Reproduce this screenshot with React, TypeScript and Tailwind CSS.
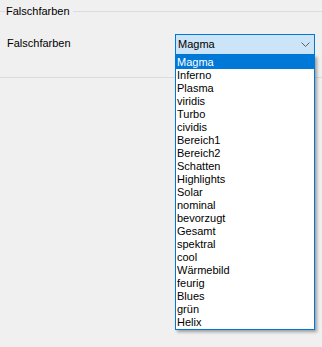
import React from "react";

const items = [
  "Magma",
  "Inferno",
  "Plasma",
  "viridis",
  "Turbo",
  "cividis",
  "Bereich1",
  "Bereich2",
  "Schatten",
  "Highlights",
  "Solar",
  "nominal",
  "bevorzugt",
  "Gesamt",
  "spektral",
  "cool",
  "Wärmebild",
  "feurig",
  "Blues",
  "grün",
  "Helix",
];

export default function App() {
  return (
    <div
      className="relative w-[322px] h-[347px] bg-[#f0f0f0] text-[11px] text-black overflow-hidden"
      style={{ fontFamily: '"Liberation Sans", Arial, sans-serif' }}
    >
      {/* group box header */}
      <div className="flex items-center h-[13px] mt-[5px]">
        <div className="w-[5px] h-px bg-[#dcdcdc]" />
        <span className="px-[1px] leading-[13px]">Falschfarben</span>
        <div className="flex-1 h-px bg-[#dcdcdc] ml-[2px]" />
      </div>

      {/* row */}
      <div className="flex items-center mt-[16px] h-[21px]">
        <span className="ml-[7px] leading-[13px] -mt-[3px]">Falschfarben</span>
        <div className="ml-auto mr-[7px] w-[140px] h-[21px] border border-[#0078d7] bg-[#cce4f7] flex items-center pl-[2px] pr-[4px]">
          <span className="leading-[13px]">Magma</span>
          <svg className="ml-auto" width="9" height="5" viewBox="0 0 9 5">
            <path d="M0.5 0.5 L4.5 4.5 L8.5 0.5" fill="none" stroke="#606060" strokeWidth="1" />
          </svg>
        </div>
      </div>

      {/* bottom line */}
      <div className="mt-[22px] h-px bg-[#dcdcdc]" />

      {/* dropdown list */}
      <div className="absolute left-[175px] top-[55px] w-[140px] border border-[#0078d7] bg-white shadow-[2px_2px_3px_rgba(0,0,0,0.35)]">
        {items.map((it, i) => (
          <div
            key={it}
            className={
              i === 0
                ? "h-[13px] leading-[13px] pl-[1px] bg-[#0078d7] text-white"
                : "h-[13px] leading-[13px] pl-[1px]"
            }
          >
            {it}
          </div>
        ))}
      </div>
    </div>
  );
}
